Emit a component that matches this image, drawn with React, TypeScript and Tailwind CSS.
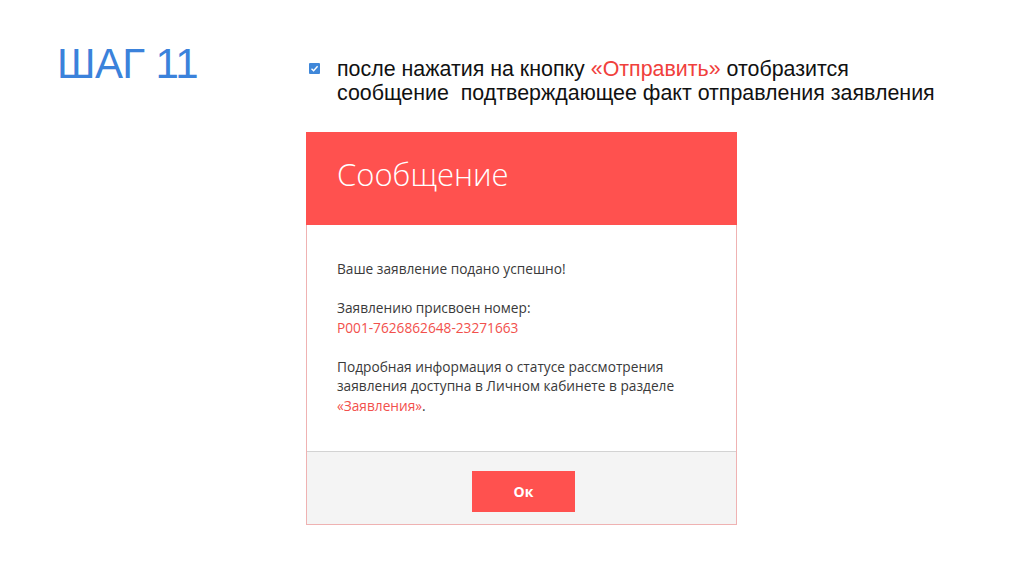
import React from "react";

export default function App() {
  return (
    <div className="w-[1024px] h-[574px] bg-white relative overflow-hidden" style={{ fontFamily: "'Liberation Sans', Arial, sans-serif" }}>
      <div className="flex">
        <div className="w-[306px] shrink-0 pl-[57px] pt-[39px]">
          <div className="text-[42px] leading-[50px] text-[#3b82db] tracking-[-0.6px]" style={{ fontFamily: "'Liberation Sans', Arial, sans-serif" }}>ШАГ 11</div>
        </div>
        <div className="flex-1 flex flex-col">
          <div className="flex pt-[57px]">
            <div className="w-[31px] shrink-0 pt-[6px] pl-[3px]">
              <svg width="11" height="11" viewBox="0 0 11 11">
                <rect x="0" y="0" width="11" height="11" rx="1" fill="#3f87d9" />
                <path d="M2.5 5.8 L4.6 7.8 L8.6 3.2" stroke="#fff" strokeWidth="1.4" fill="none" />
              </svg>
            </div>
            <div className="text-[21.4px] leading-[24px] text-[#111]">
              <div>после нажатия на кнопку <span className="text-[#f0403c]">«Отправить»</span> отобразится</div>
              <div className="whitespace-pre">сообщение  подтверждающее факт отправления заявления</div>
            </div>
          </div>
          <div className="mt-[27px] w-[431px] border border-[#efb2b2] flex flex-col" style={{ fontFamily: "'Open Sans', sans-serif" }}>
            <div className="h-[93px] -mt-px -mx-px bg-[#ff514f] pl-[31px] flex items-center">
              <div className="text-[31px] font-light text-white -mt-[8px]">Сообщение</div>
            </div>
            <div className="h-[226px] bg-white pl-[30px] pt-[34px] text-[13.7px] leading-[19.5px] text-[#3a3a3a]">
              <div>Ваше заявление подано успешно!</div>
              <div className="mt-[19.5px]">Заявлению присвоен номер:</div>
              <div className="text-[#f2504c]">P001-7626862648-23271663</div>
              <div className="mt-[19.5px]">Подробная информация о статусе рассмотрения</div>
              <div>заявления доступна в Личном кабинете в разделе</div>
              <div><span className="text-[#f2504c]">«Заявления»</span>.</div>
            </div>
            <div className="h-[73px] bg-[#f4f4f4] border-t border-[#d3d3d3] flex justify-center pt-[19px] pl-[4px]">
              <div className="w-[103px] h-[41px] bg-[#ff514f] text-white font-bold text-[14px] flex items-center justify-center">Ок</div>
            </div>
          </div>
        </div>
      </div>
    </div>
  );
}
